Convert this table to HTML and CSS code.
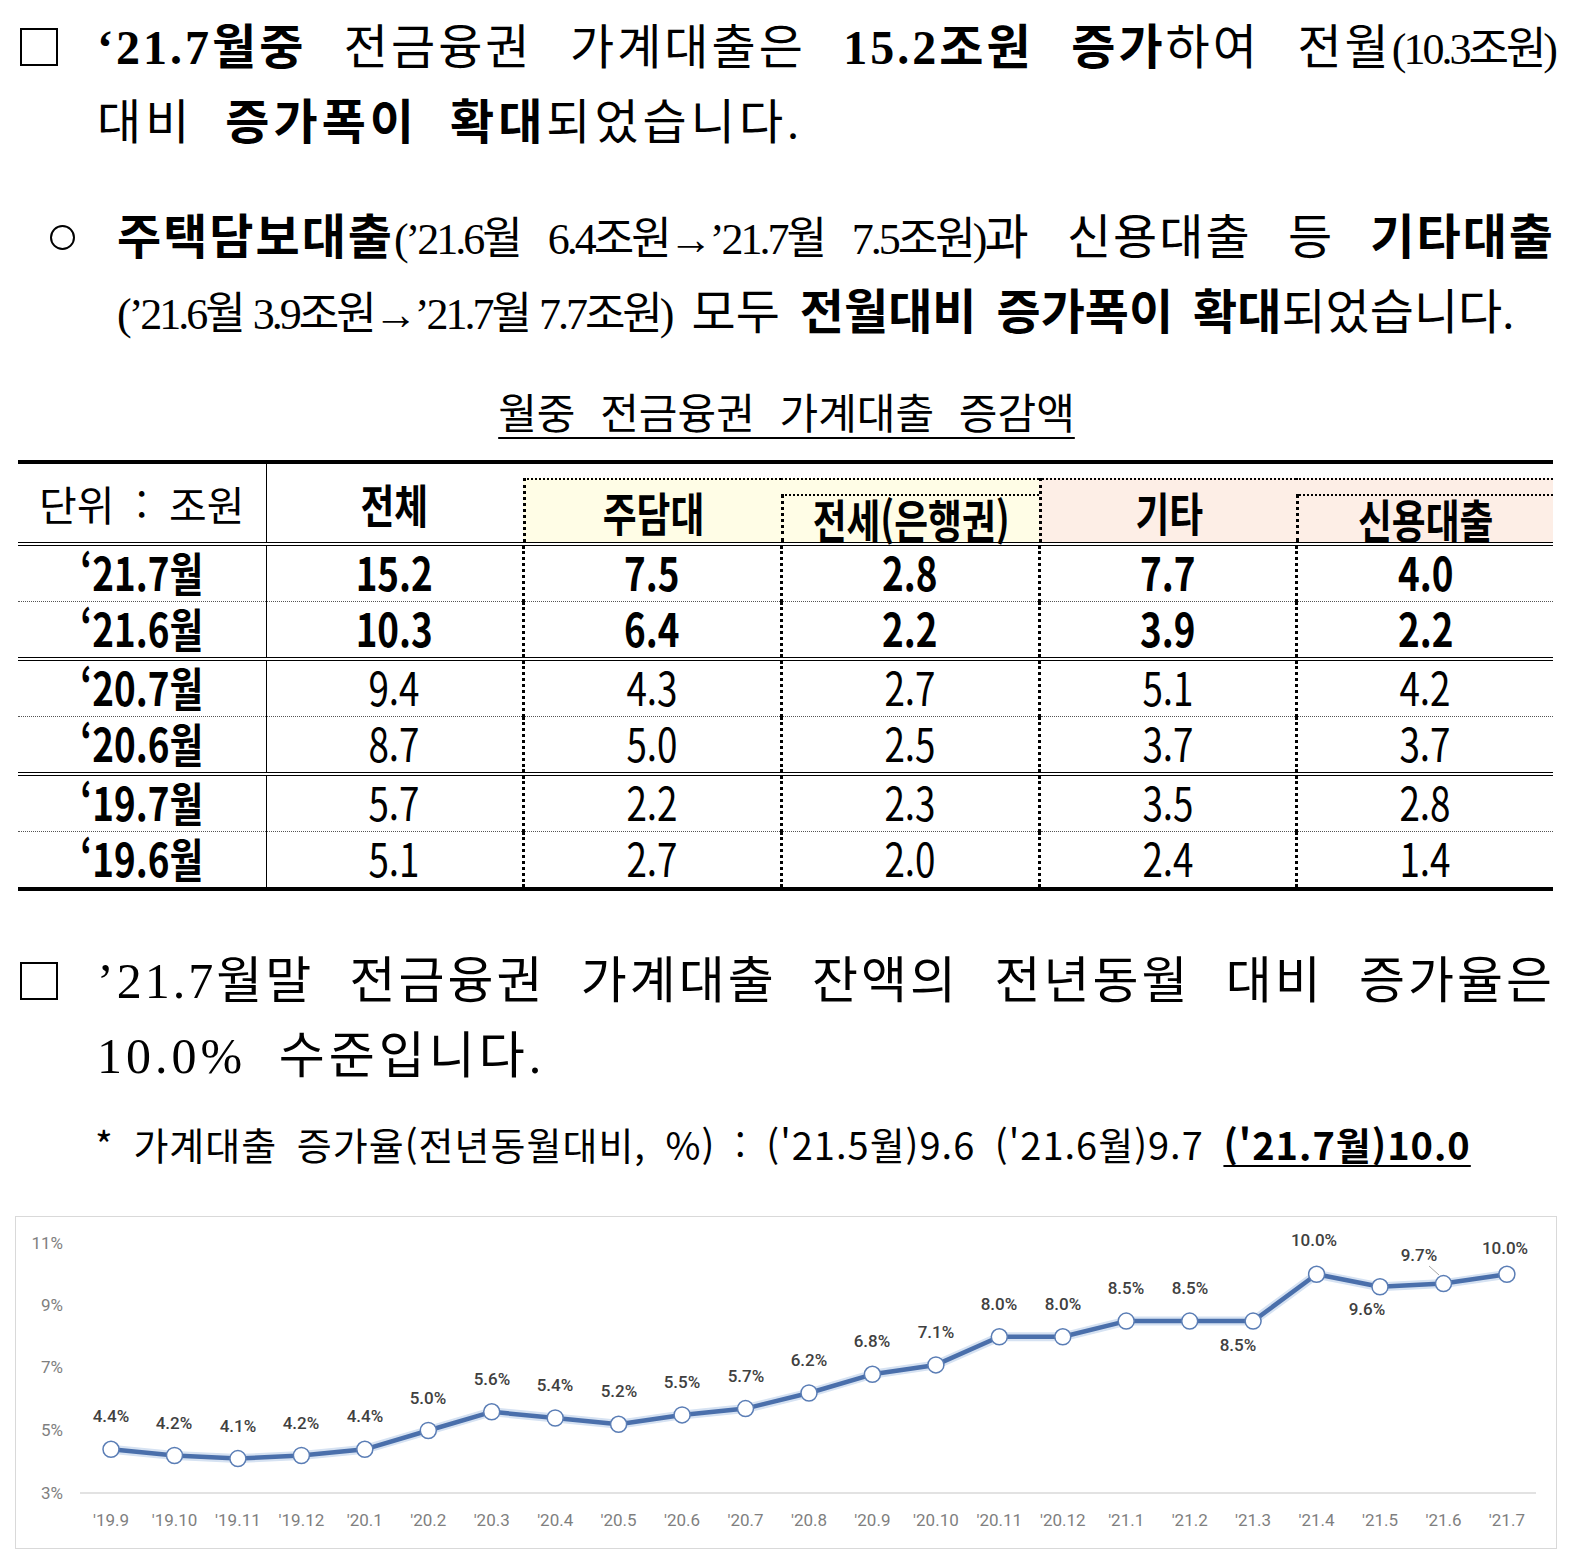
FILE: index.html
```html
<!DOCTYPE html>
<html lang="ko">
<head>
<meta charset="utf-8">
<title>가계대출 동향</title>
<link rel="stylesheet" href="styles.css">
</head>
<body>
<div class="page">

  <div class="item main">
    <div class="mark"><span class="box"></span></div>
    <div class="lines">
      <div class="ln jst l1"><b>‘21.7월중</b> 전금융권 가계대출은 <b>15.2조원</b> <b>증가</b>하여 전월<span class="sm">(10.3조원)</span></div>
      <div class="ln ws">대비 <b>증가폭이</b> <b>확대</b>되었습니다.</div>
    </div>
  </div>

  <div class="item main subitem">
    <div class="mark mark-sub"><span class="circ"></span></div>
    <div class="lines">
      <div class="ln jst l3"><b>주택담보대출</b><span class="sm">(’21.6월<span class="gap"></span>6.4조원→’21.7월<span class="gap"></span>7.5조원)</span>과 신용대출 등 <b>기타대출</b></div>
      <div class="ln ws ws4"><span class="sm">(’21.6월 3.9조원→’21.7월 7.7조원)</span> 모두 <b>전월대비</b> <b>증가폭이</b> <b>확대</b>되었습니다.</div>
    </div>
  </div>

  <div class="ttl"><span class="ttl-text">월중 전금융권 가계대출 증감액</span></div>

  <table class="tbl">
    <colgroup>
      <col class="w1"><col class="w2"><col class="w3"><col class="w3"><col class="w2"><col class="w2">
    </colgroup>
    <thead>
      <tr>
        <th class="c1 hn"><div class="hc"><span class="cx unit">단위 : 조원</span></div></th>
        <th><div class="hc"><span class="cx b">전체</span></div></th>
        <th><div class="grp y gl"><span class="cx b">주담대</span></div></th>
        <th><div class="grp y low"><div class="subb"><span class="cx b">전세(은행권)</span></div></div></th>
        <th><div class="grp p gl"><span class="cx b">기타</span></div></th>
        <th><div class="grp p low"><div class="subb"><span class="cx b">신용대출</span></div></div></th>
      </tr>
    </thead>
    <tbody>
      <tr class="dot bold">
        <td class="c1"><span class="cx">‘21.7월</span></td><td><span class="cx">15.2</span></td><td class="dl"><span class="cx">7.5</span></td><td class="dl"><span class="cx">2.8</span></td><td class="dl"><span class="cx">7.7</span></td><td class="dl"><span class="cx">4.0</span></td>
      </tr>
      <tr class="dbl bold">
        <td class="c1"><span class="cx">‘21.6월</span></td><td><span class="cx">10.3</span></td><td class="dl"><span class="cx">6.4</span></td><td class="dl"><span class="cx">2.2</span></td><td class="dl"><span class="cx">3.9</span></td><td class="dl"><span class="cx">2.2</span></td>
      </tr>
      <tr class="dot">
        <td class="c1"><span class="cx">‘20.7월</span></td><td><span class="cx">9.4</span></td><td class="dl"><span class="cx">4.3</span></td><td class="dl"><span class="cx">2.7</span></td><td class="dl"><span class="cx">5.1</span></td><td class="dl"><span class="cx">4.2</span></td>
      </tr>
      <tr class="dbl">
        <td class="c1"><span class="cx">‘20.6월</span></td><td><span class="cx">8.7</span></td><td class="dl"><span class="cx">5.0</span></td><td class="dl"><span class="cx">2.5</span></td><td class="dl"><span class="cx">3.7</span></td><td class="dl"><span class="cx">3.7</span></td>
      </tr>
      <tr class="dot">
        <td class="c1"><span class="cx">‘19.7월</span></td><td><span class="cx">5.7</span></td><td class="dl"><span class="cx">2.2</span></td><td class="dl"><span class="cx">2.3</span></td><td class="dl"><span class="cx">3.5</span></td><td class="dl"><span class="cx">2.8</span></td>
      </tr>
      <tr>
        <td class="c1"><span class="cx">‘19.6월</span></td><td><span class="cx">5.1</span></td><td class="dl"><span class="cx">2.7</span></td><td class="dl"><span class="cx">2.0</span></td><td class="dl"><span class="cx">2.4</span></td><td class="dl"><span class="cx">1.4</span></td>
      </tr>
    </tbody>
  </table>

  <div class="item main sec2">
    <div class="mark"><span class="box"></span></div>
    <div class="lines">
      <div class="ln jst">’21.7월말 전금융권 가계대출 잔액의 전년동월 대비 증가율은</div>
      <div class="ln ws">10.0% 수준입니다.</div>
    </div>
  </div>

  <div class="note">* 가계대출 증가율(전년동월대비, %) : ('21.5월)9.6 ('21.6월)9.7 <b class="ul">('21.7월)10.0</b></div>

  <div class="chart">
    <svg width="1540" height="331" viewBox="0 0 1540 331">
      <g class="ylab">
        <text x="47" y="32">11%</text>
        <text x="47" y="94">9%</text>
        <text x="47" y="156">7%</text>
        <text x="47" y="219">5%</text>
        <text x="47" y="282">3%</text>
      </g>
      <line class="axis" x1="64" y1="276" x2="1520" y2="276"/>
      <polyline class="glow" points="95,232.3 158.5,238.5 221.9,241.6 285.4,238.5 348.8,232.3 412.3,213.5 475.7,194.8 539.2,201 602.6,207.3 666.1,197.9 729.5,191.6 793,176 856.4,157.3 919.9,147.9 983.3,119.8 1046.8,119.8 1110.2,104.1 1173.7,104.1 1237.1,104.1 1300.6,57.3 1364,69.8 1427.5,66.6 1490.9,57.3"/>
      <polyline class="ln-s" points="95,232.3 158.5,238.5 221.9,241.6 285.4,238.5 348.8,232.3 412.3,213.5 475.7,194.8 539.2,201 602.6,207.3 666.1,197.9 729.5,191.6 793,176 856.4,157.3 919.9,147.9 983.3,119.8 1046.8,119.8 1110.2,104.1 1173.7,104.1 1237.1,104.1 1300.6,57.3 1364,69.8 1427.5,66.6 1490.9,57.3"/>
      <g class="dots">
        <circle cx="95" cy="232.3" r="8"/><circle cx="158.5" cy="238.5" r="8"/><circle cx="221.9" cy="241.6" r="8"/><circle cx="285.4" cy="238.5" r="8"/><circle cx="348.8" cy="232.3" r="8"/><circle cx="412.3" cy="213.5" r="8"/><circle cx="475.7" cy="194.8" r="8"/><circle cx="539.2" cy="201" r="8"/><circle cx="602.6" cy="207.3" r="8"/><circle cx="666.1" cy="197.9" r="8"/><circle cx="729.5" cy="191.6" r="8"/><circle cx="793" cy="176" r="8"/><circle cx="856.4" cy="157.3" r="8"/><circle cx="919.9" cy="147.9" r="8"/><circle cx="983.3" cy="119.8" r="8"/><circle cx="1046.8" cy="119.8" r="8"/><circle cx="1110.2" cy="104.1" r="8"/><circle cx="1173.7" cy="104.1" r="8"/><circle cx="1237.1" cy="104.1" r="8"/><circle cx="1300.6" cy="57.3" r="8"/><circle cx="1364" cy="69.8" r="8"/><circle cx="1427.5" cy="66.6" r="8"/><circle cx="1490.9" cy="57.3" r="8"/>
      </g>
      <line class="leader" x1="1413" y1="49" x2="1423" y2="58"/>
      <g class="vlab">
        <text x="95" y="205">4.4%</text>
        <text x="158" y="212">4.2%</text>
        <text x="222" y="215">4.1%</text>
        <text x="285" y="212">4.2%</text>
        <text x="349" y="205">4.4%</text>
        <text x="412" y="187">5.0%</text>
        <text x="476" y="168">5.6%</text>
        <text x="539" y="174">5.4%</text>
        <text x="603" y="180">5.2%</text>
        <text x="666" y="171">5.5%</text>
        <text x="730" y="165">5.7%</text>
        <text x="793" y="149">6.2%</text>
        <text x="856" y="130">6.8%</text>
        <text x="920" y="121">7.1%</text>
        <text x="983" y="93">8.0%</text>
        <text x="1047" y="93">8.0%</text>
        <text x="1110" y="77">8.5%</text>
        <text x="1174" y="77">8.5%</text>
        <text x="1222" y="134">8.5%</text>
        <text x="1298" y="29">10.0%</text>
        <text x="1351" y="98">9.6%</text>
        <text x="1403" y="44">9.7%</text>
        <text x="1489" y="37">10.0%</text>
      </g>
      <g class="xlab">
        <text x="95" y="309">'19.9</text>
        <text x="158.5" y="309">'19.10</text>
        <text x="221.9" y="309">'19.11</text>
        <text x="285.4" y="309">'19.12</text>
        <text x="348.8" y="309">'20.1</text>
        <text x="412.3" y="309">'20.2</text>
        <text x="475.7" y="309">'20.3</text>
        <text x="539.2" y="309">'20.4</text>
        <text x="602.6" y="309">'20.5</text>
        <text x="666.1" y="309">'20.6</text>
        <text x="729.5" y="309">'20.7</text>
        <text x="793" y="309">'20.8</text>
        <text x="856.4" y="309">'20.9</text>
        <text x="919.9" y="309">'20.10</text>
        <text x="983.3" y="309">'20.11</text>
        <text x="1046.8" y="309">'20.12</text>
        <text x="1110.2" y="309">'21.1</text>
        <text x="1173.7" y="309">'21.2</text>
        <text x="1237.1" y="309">'21.3</text>
        <text x="1300.6" y="309">'21.4</text>
        <text x="1364" y="309">'21.5</text>
        <text x="1427.5" y="309">'21.6</text>
        <text x="1490.9" y="309">'21.7</text>
      </g>
    </svg>
  </div>

</div>
</body>
</html>
```

FILE: styles.css
```css
html, body {
  margin: 0;
  padding: 0;
  background: #ffffff;
  color: #000000;
}

.page {
  width: 1537px;
  padding: 10px 18px 0 18px;
}

.main {
  font-family: "Liberation Serif", "Noto Sans CJK KR", serif;
  font-size: 48px;
  line-height: 75px;
}

.main b {
  font-weight: 700;
}

.item {
  display: flex;
}

.mark {
  width: 79px;
  flex: none;
}

.box {
  display: block;
  width: 38px;
  height: 38px;
  box-sizing: border-box;
  border: 2px solid #000;
  margin: 18px 0 0 2px;
}

.mark-sub {
  width: 99px;
}

.circ {
  display: block;
  width: 25px;
  height: 25px;
  box-sizing: border-box;
  border: 2px solid #000;
  border-radius: 50%;
  margin: 25px 0 0 32px;
}

.lines {
  flex: 1;
  min-width: 0;
}

.ln {
  height: 75px;
}

.jst {
  text-align: justify;
  text-align-last: justify;
}

.l1 {
  letter-spacing: 3px;
}

.l3 {
  letter-spacing: 2px;
}

.gap {
  display: inline-block;
  width: 28px;
}

.ws {
  white-space: nowrap;
  word-spacing: 16px;
  letter-spacing: 4px;
}

.ws4 {
  word-spacing: 8px;
  letter-spacing: 0;
}

.sm {
  font-size: 44px;
  letter-spacing: -3px;
  word-spacing: 2px;
}

.subitem {
  margin-top: 40px;
}

/* table title */
.ttl {
  margin-top: 31px;
  text-align: center;
  font-family: "Noto Sans CJK KR", sans-serif;
  font-size: 42px;
  line-height: 60px;
  word-spacing: 13px;
}

.ttl-text {
  text-decoration: underline;
  text-decoration-thickness: 2px;
  text-underline-offset: 8px;
}

/* table */
.tbl {
  margin-top: 19px;
  width: 1535px;
  table-layout: fixed;
  border-collapse: collapse;
  border-top: 4px solid #000;
  border-bottom: 4px solid #000;
  font-family: "Noto Sans CJK KR", sans-serif;
  font-size: 46px;
}

.w1 { width: 248px; }
.w2 { width: 257px; }
.w3 { width: 258px; }

.tbl th {
  height: 78px;
  padding: 0;
  vertical-align: bottom;
  font-weight: 400;
  border-bottom: 4px double #000;
}

.tbl td {
  height: 49px;
  padding: 0 0 6px 0;
  text-align: center;
  vertical-align: middle;
  line-height: 1;
}

.tbl .c1 {
  border-right: 1px solid #000;
  font-weight: 700;
}

.tbl th.hn {
  font-weight: 400;
}

.hc {
  height: 78px;
  display: flex;
  align-items: center;
  justify-content: center;
}

.grp {
  height: 64px;
  box-sizing: border-box;
  border-top: 2px dotted #000;
  display: flex;
  align-items: center;
  justify-content: center;
}

.grp.low {
  align-items: flex-end;
  justify-content: stretch;
}

.gl {
  border-left: 3px dotted #000;
}

.y { background: #fffde6; }
.p { background: #fdeee6; }

.subb {
  width: 100%;
  height: 48px;
  box-sizing: border-box;
  padding-bottom: 3px;
  border-top: 2px dotted #000;
  border-left: 3px dotted #000;
  display: flex;
  align-items: center;
  justify-content: center;
}

.cx {
  display: inline-block;
  transform: scaleX(0.8);
  line-height: 1;
  white-space: nowrap;
}

.cx.b { font-weight: 700; }

.cx.unit {
  transform: none;
  font-size: 41px;
  font-weight: 400;
  word-spacing: 10px;
}

.dl {
  border-left: 3px dotted #000;
}

.tbl tr.dot td {
  border-bottom: 1px dotted #555;
}

.tbl tr.dbl td {
  border-bottom: 4px double #000;
}

.tbl tr.bold td {
  font-weight: 700;
}

/* second section */
.sec2 {
  margin-top: 53px;
  font-size: 50px;
}

.sec2 .jst {
  letter-spacing: 3px;
}

.note {
  margin-top: 25px;
  padding-left: 77px;
  font-family: "Noto Sans CJK KR", sans-serif;
  font-size: 38px;
  line-height: 50px;
  word-spacing: 8px;
  letter-spacing: 1px;
  white-space: nowrap;
}

.note .ul {
  font-weight: 700;
  text-decoration: underline;
  text-decoration-thickness: 2px;
  text-underline-offset: 5px;
}

/* chart */
.chart {
  margin-top: 47px;
  margin-left: -3px;
  width: 1540px;
  height: 331px;
  border: 1px solid #d9d9d9;
  background: #fff;
}

.chart svg {
  display: block;
}

.ylab text {
  font-family: Roboto, "Liberation Sans", sans-serif;
  font-size: 17px;
  fill: #7f7f7f;
  text-anchor: end;
}

.xlab text {
  font-family: Roboto, "Liberation Sans", sans-serif;
  font-size: 17px;
  fill: #7f7f7f;
  text-anchor: middle;
}

.vlab text {
  font-family: Roboto, "Liberation Sans", sans-serif;
  font-size: 17px;
  font-weight: 500;
  fill: #404040;
  text-anchor: middle;
}

.axis {
  stroke: #d9d9d9;
  stroke-width: 1.5;
}

.glow {
  fill: none;
  stroke: #d6e2f2;
  stroke-width: 9;
  stroke-linejoin: round;
}

.ln-s {
  fill: none;
  stroke: #4a6fab;
  stroke-width: 4.5;
  stroke-linejoin: round;
}

.dots circle {
  fill: #ffffff;
  stroke: #5a7db5;
  stroke-width: 1.5;
}

.leader {
  stroke: #a6a6a6;
  stroke-width: 1;
}
```
